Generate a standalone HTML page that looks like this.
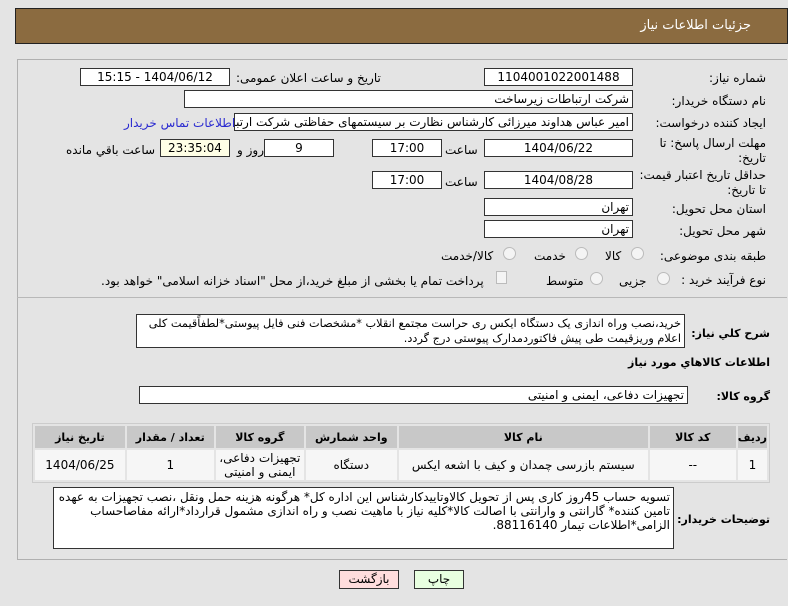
<!DOCTYPE html>
<html><head><meta charset="utf-8"><style>
*{margin:0;padding:0;box-sizing:border-box}
body{width:788px;height:606px;background:#e4e4e4;font-family:"DejaVu Sans","Liberation Sans",sans-serif;font-size:12px;color:#000;position:relative;overflow:hidden}
.a{position:absolute;white-space:nowrap}
.hdr{left:15px;top:8px;width:773px;height:36px;background:#8b6b40;border:1px solid #222}
.hdr span{position:absolute;right:36px;top:9px;color:#fff;font-size:13px}
.panel{left:17px;top:59px;width:770px;height:501px;border:1px solid #b0b0b0;border-right:none}
.box{position:absolute;background:#fff;border:1px solid #333;height:18px;line-height:16px;text-align:center;direction:rtl;white-space:nowrap;overflow:hidden}
.l{text-align:right;padding-right:3px}
.lab{position:absolute;direction:rtl;text-align:right;white-space:nowrap}
.b{font-weight:bold;font-size:11px}
.rad{position:absolute;width:13px;height:13px;border-radius:50%;border:1px solid #bbb;background:#f4f4f4}
table{position:absolute;left:32px;top:423px;width:738px;border-collapse:separate;border-spacing:2px;background:#e4e4e4;border:1px solid #ccc;direction:rtl}
th{background:#c8c8c8;height:22px;font-weight:bold;font-size:11px}
td{background:#f6f6f6;height:30px;text-align:center;font-size:12px;line-height:14px}
.btn{position:absolute;height:19px;border:1px solid #333;text-align:center;line-height:17px}
</style></head><body>
<div class="a hdr"><span>جزئیات اطلاعات نیاز</span></div>
<div class="a panel"></div>
<div class="a" style="left:17px;top:297px;width:770px;border-top:1px solid #b8b8b8"></div>

<div class="lab" style="right:22px;top:71px">شماره نیاز:</div>
<div class="box" style="left:484px;top:68px;width:149px">1104001022001488</div>
<div class="lab" style="left:236px;top:71px">تاریخ و ساعت اعلان عمومی:</div>
<div class="box" style="left:80px;top:68px;width:150px">1404/06/12 - 15:15</div>

<div class="lab" style="right:22px;top:94px">نام دستگاه خریدار:</div>
<div class="box l" style="left:184px;top:90px;width:449px">شرکت ارتباطات زیرساخت</div>

<div class="lab" style="right:22px;top:116px">ایجاد کننده درخواست:</div>
<div class="box l" style="left:234px;top:113px;width:399px">امیر عباس هداوند میرزائی کارشناس نظارت بر سیستمهای حفاظتی شرکت ارتبا</div>
<div class="lab" style="left:124px;top:116px;color:#2a2ad0">اطلاعات تماس خریدار</div>

<div class="lab" style="right:22px;top:136px">مهلت ارسال پاسخ: تا</div>
<div class="lab" style="right:22px;top:151px">تاریخ:</div>
<div class="box" style="left:484px;top:139px;width:149px">1404/06/22</div>
<div class="lab" style="left:445px;top:143px">ساعت</div>
<div class="box" style="left:372px;top:139px;width:70px">17:00</div>
<div class="box" style="left:264px;top:139px;width:70px">9</div>
<div class="lab" style="left:237px;top:143px">روز و</div>
<div class="box" style="left:160px;top:139px;width:70px;background:#ffffe6">23:35:04</div>
<div class="lab" style="left:66px;top:143px">ساعت باقي مانده</div>

<div class="lab" style="right:22px;top:168px">حداقل تاریخ اعتبار قیمت:</div>
<div class="lab" style="right:22px;top:183px">تا تاریخ:</div>
<div class="box" style="left:484px;top:171px;width:149px">1404/08/28</div>
<div class="lab" style="left:445px;top:175px">ساعت</div>
<div class="box" style="left:372px;top:171px;width:70px">17:00</div>

<div class="lab" style="right:22px;top:202px">استان محل تحویل:</div>
<div class="box l" style="left:484px;top:198px;width:149px">تهران</div>
<div class="lab" style="right:22px;top:224px">شهر محل تحویل:</div>
<div class="box l" style="left:484px;top:220px;width:149px">تهران</div>

<div class="lab" style="right:22px;top:249px">طبقه بندی موضوعی:</div>
<div class="rad" style="left:631px;top:247px"></div><div class="lab" style="left:605px;top:249px">کالا</div>
<div class="rad" style="left:575px;top:247px"></div><div class="lab" style="left:534px;top:249px">خدمت</div>
<div class="rad" style="left:503px;top:247px"></div><div class="lab" style="left:441px;top:249px">کالا/خدمت</div>

<div class="lab" style="right:22px;top:273px">نوع فرآیند خرید :</div>
<div class="rad" style="left:657px;top:272px"></div><div class="lab" style="left:619px;top:274px">جزیی</div>
<div class="rad" style="left:590px;top:272px"></div><div class="lab" style="left:546px;top:274px">متوسط</div>
<div class="a" style="left:496px;top:271px;width:11px;height:13px;border:1px solid #bbb;background:#f4f4f4"></div>
<div class="lab" style="left:101px;top:274px">پرداخت تمام یا بخشی از مبلغ خرید،از محل "اسناد خزانه اسلامی" خواهد بود.</div>

<div class="lab b" style="right:18px;top:327px">شرح کلي نیاز:</div>
<div class="a" style="left:136px;top:314px;width:549px;height:34px;background:#fff;border:1px solid #333;direction:rtl;text-align:right;padding:1px 3px;line-height:15px;white-space:normal;font-size:11.3px;letter-spacing:-0.2px">خرید،نصب وراه اندازی یک دستگاه ایکس ری حراست مجتمع انقلاب *مشخصات فنی فایل پیوستی*لطفاًقیمت کلی اعلام وریزقیمت طی پیش فاکتوردمدارک پیوستی درج گردد.</div>
<div class="lab b" style="right:18px;top:356px">اطلاعات کالاهاي مورد نیاز</div>

<div class="lab b" style="right:18px;top:390px">گروه کالا:</div>
<div class="box l" style="left:139px;top:386px;width:549px">تجهیزات دفاعی، ایمنی و امنیتی</div>

<table>
<tr><th style="width:25px">ردیف</th><th style="width:86px">کد کالا</th><th style="width:249px">نام کالا</th><th style="width:91px">واحد شمارش</th><th style="width:88px">گروه کالا</th><th style="width:87px">تعداد / مقدار</th><th>تاریخ نیاز</th></tr>
<tr><td>1</td><td>--</td><td>سیستم بازرسی چمدان و کیف با اشعه ایکس</td><td>دستگاه</td><td>تجهیزات دفاعی، ایمنی و امنیتی</td><td>1</td><td>1404/06/25</td></tr>
</table>

<div class="lab b" style="right:18px;top:513px">توضیحات خریدار:</div>
<div class="a" style="left:53px;top:487px;width:621px;height:62px;background:#fff;border:1px solid #333;direction:rtl;text-align:right;padding:2px 3px;line-height:14px;white-space:normal">تسویه حساب 45روز کاری پس از تحویل کالاوتاییدکارشناس این اداره کل* هرگونه هزینه حمل ونقل ،نصب تجهیزات به عهده تامین کننده* گارانتی و وارانتی با اصالت کالا*کلیه نیاز با ماهیت نصب و راه اندازی مشمول قرارداد*ارائه مفاصاحساب الزامی*اطلاعات تیمار 88116140.</div>

<div class="btn" style="left:339px;top:570px;width:60px;background:#fdd">بازگشت</div>
<div class="btn" style="left:414px;top:570px;width:50px;background:#e8ffe0">چاپ</div>
</body></html>
